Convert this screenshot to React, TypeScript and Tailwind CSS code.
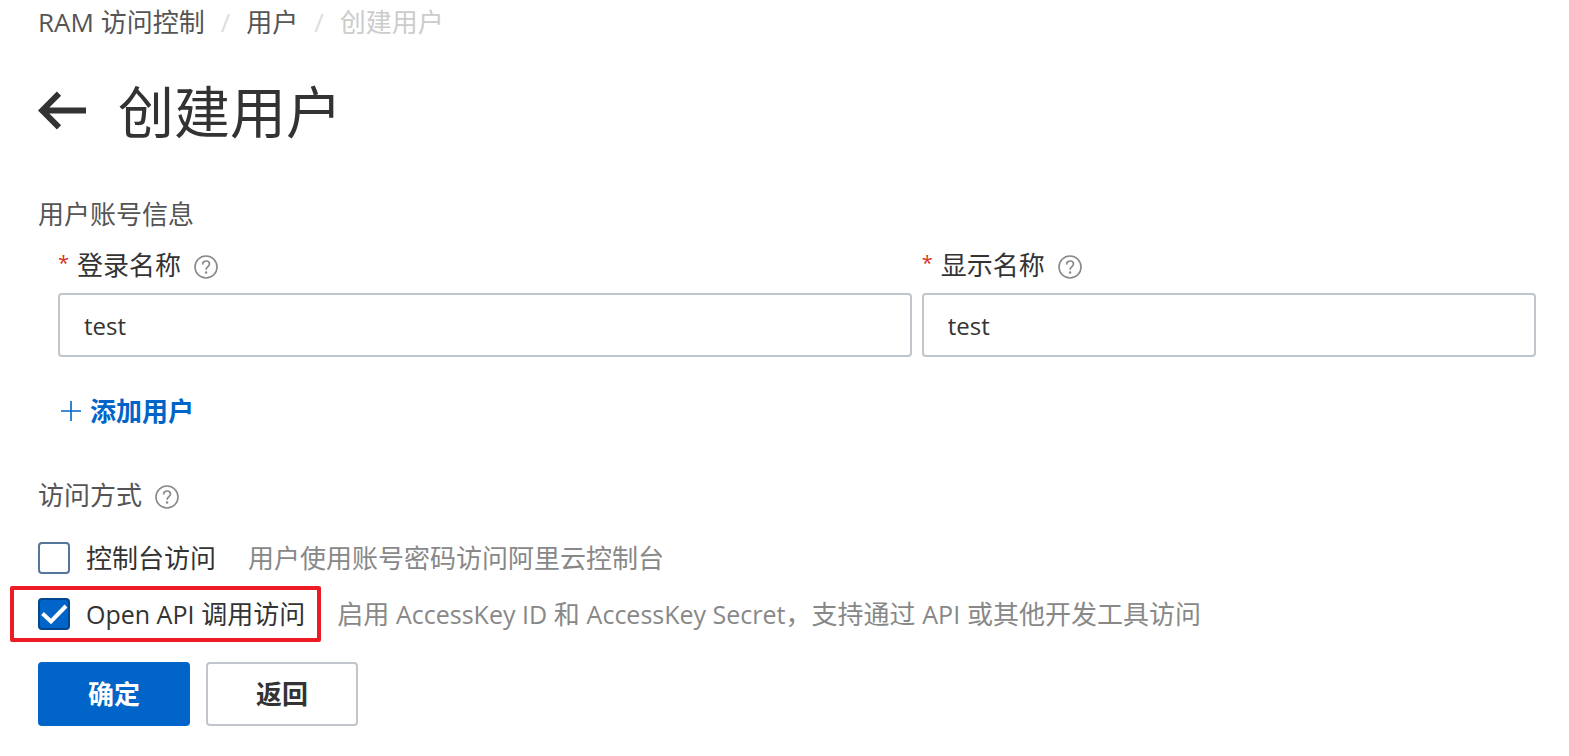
import React, { useState } from "react";

const HelpIcon = () => (
  <svg viewBox="0 0 24 24" className="mt-1 h-6 w-6 shrink-0 text-[#888]" fill="none" stroke="currentColor" aria-hidden="true">
    <circle cx="12" cy="12" r="11" strokeWidth="1.6" />
    <path d="M8.6 9.4c0-2 1.5-3.4 3.5-3.4s3.4 1.3 3.4 3.1c0 2.5-3.4 2.7-3.4 5.6" strokeWidth="1.7" />
    <circle cx="12.1" cy="17.5" r="1.2" fill="currentColor" stroke="none" />
  </svg>
);

const BackIcon = () => (
  <svg viewBox="0 0 48 40" className="h-10 w-12" fill="none" stroke="#333" strokeWidth="6" aria-hidden="true">
    <path d="M21 2.7 4.2 19.5 21 36.3M4.2 19.5H48" />
  </svg>
);

// Latin words inside Chinese copy run slightly smaller
const Latin = ({ children }: { children: React.ReactNode }) => <span className="text-[25px]">{children}</span>;

type FieldProps = {
  id: string;
  label: string;
  value: string;
  onChange: (value: string) => void;
};

const Field = ({ id, label, value, onChange }: FieldProps) => (
  <div className="min-w-0">
    <div className="flex items-center gap-[13px]">
      <label htmlFor={id} className="flex gap-2 text-[#333]">
        <span className="text-xl leading-8 text-[#d93026]">*</span>
        {label}
      </label>
      <HelpIcon />
    </div>
    <input
      id={id}
      type="text"
      value={value}
      onChange={(e) => onChange(e.target.value)}
      className="mt-2.5 block h-16 w-full rounded border-2 border-[#c0c6cc] bg-white px-6 text-2xl text-[#333] outline-none focus:border-[#0064c8]"
    />
  </div>
);

type AccessOptionProps = {
  label: React.ReactNode;
  description: React.ReactNode;
  checked: boolean;
  onChange: (checked: boolean) => void;
  highlighted?: boolean;
};

const AccessOption = ({ label, description, checked, onChange, highlighted }: AccessOptionProps) => (
  <div className="flex items-center gap-4">
    <label
      className={`-ml-7 flex items-center gap-4 border-4 py-1.5 pr-3 pl-6 text-[#333] ${
        highlighted ? "rounded-xs border-[#ed1c24]" : "border-transparent"
      }`}
    >
      <span className="grid h-8 w-8 shrink-0">
        <input
          type="checkbox"
          checked={checked}
          onChange={(e) => onChange(e.target.checked)}
          className="peer col-start-1 row-start-1 appearance-none rounded border-2 border-[#557599] bg-white checked:border-[#00478f] checked:bg-[#0064c8]"
        />
        <svg
          viewBox="0 0 32 32"
          className="pointer-events-none invisible col-start-1 row-start-1 peer-checked:visible"
          fill="none"
          stroke="#fff"
          strokeWidth="4"
          aria-hidden="true"
        >
          <path d="M4.5 15.5 13 23.5 28 8" />
        </svg>
      </span>
      <span>{label}</span>
    </label>
    <span className="text-[#888]">{description}</span>
  </div>
);

export default function App() {
  const [loginName, setLoginName] = useState("test");
  const [displayName, setDisplayName] = useState("test");
  const [consoleAccess, setConsoleAccess] = useState(false);
  const [apiAccess, setApiAccess] = useState(true);

  return (
    <main className="pr-[33px] pl-[38px] font-['Open_Sans','Noto_Sans_CJK_SC',sans-serif] text-[26px] leading-9 text-[#555]">
      {/* Breadcrumb */}
      <nav className="flex gap-4 pt-1">
        <a href="#ram">RAM 访问控制</a>
        <span className="text-[#ddd]">/</span>
        <a href="#users">用户</a>
        <span className="text-[#ddd]">/</span>
        <span className="text-[#ccc]">创建用户</span>
      </nav>

      <div className="mt-[31px] flex items-center gap-8">
        <button type="button" aria-label="返回上一页">
          <BackIcon />
        </button>
        <h1 className="text-[56px] leading-20 text-[#333]">创建用户</h1>
      </div>

      {/* Account info */}
      <section className="mt-[45px]">
        <h2>用户账号信息</h2>
        <div className="mt-[15px] pl-5">
          <div className="grid grid-cols-[1.39fr_1fr] gap-2.5">
            <Field id="login-name" label="登录名称" value={loginName} onChange={setLoginName} />
            <Field id="display-name" label="显示名称" value={displayName} onChange={setDisplayName} />
          </div>
          <button type="button" className="mt-9 flex items-center gap-2 font-bold text-[#0064c8]">
            <svg viewBox="0 0 24 24" className="h-6 w-6" stroke="currentColor" strokeWidth="1.6" aria-hidden="true">
              <path d="M3 12h20M13 2v20" />
            </svg>
            添加用户
          </button>
        </div>
      </section>

      {/* Access mode */}
      <section className="mt-12">
        <div className="flex items-center gap-[13px]">
          <h2>访问方式</h2>
          <HelpIcon />
        </div>
        <div className="mt-[17px]">
          <AccessOption
            label="控制台访问"
            description="用户使用账号密码访问阿里云控制台"
            checked={consoleAccess}
            onChange={setConsoleAccess}
          />
          <AccessOption
            label={
              <>
                <Latin>Open API</Latin> 调用访问
              </>
            }
            description={
              <>
                启用 <Latin>AccessKey ID</Latin> 和 <Latin>AccessKey Secret</Latin>{"\uFF0C"}支持通过 <Latin>API</Latin> 或其他开发工具访问
              </>
            }
            checked={apiAccess}
            onChange={setApiAccess}
            highlighted
          />
        </div>
      </section>

      <div className="mt-5 flex gap-4 font-bold">
        <button type="button" className="h-16 w-38 rounded bg-[#0064c8] text-white">
          确定
        </button>
        <button type="button" className="h-16 w-38 rounded border-2 border-[#c0c6cc] bg-white text-[#333]">
          返回
        </button>
      </div>
    </main>
  );
}
